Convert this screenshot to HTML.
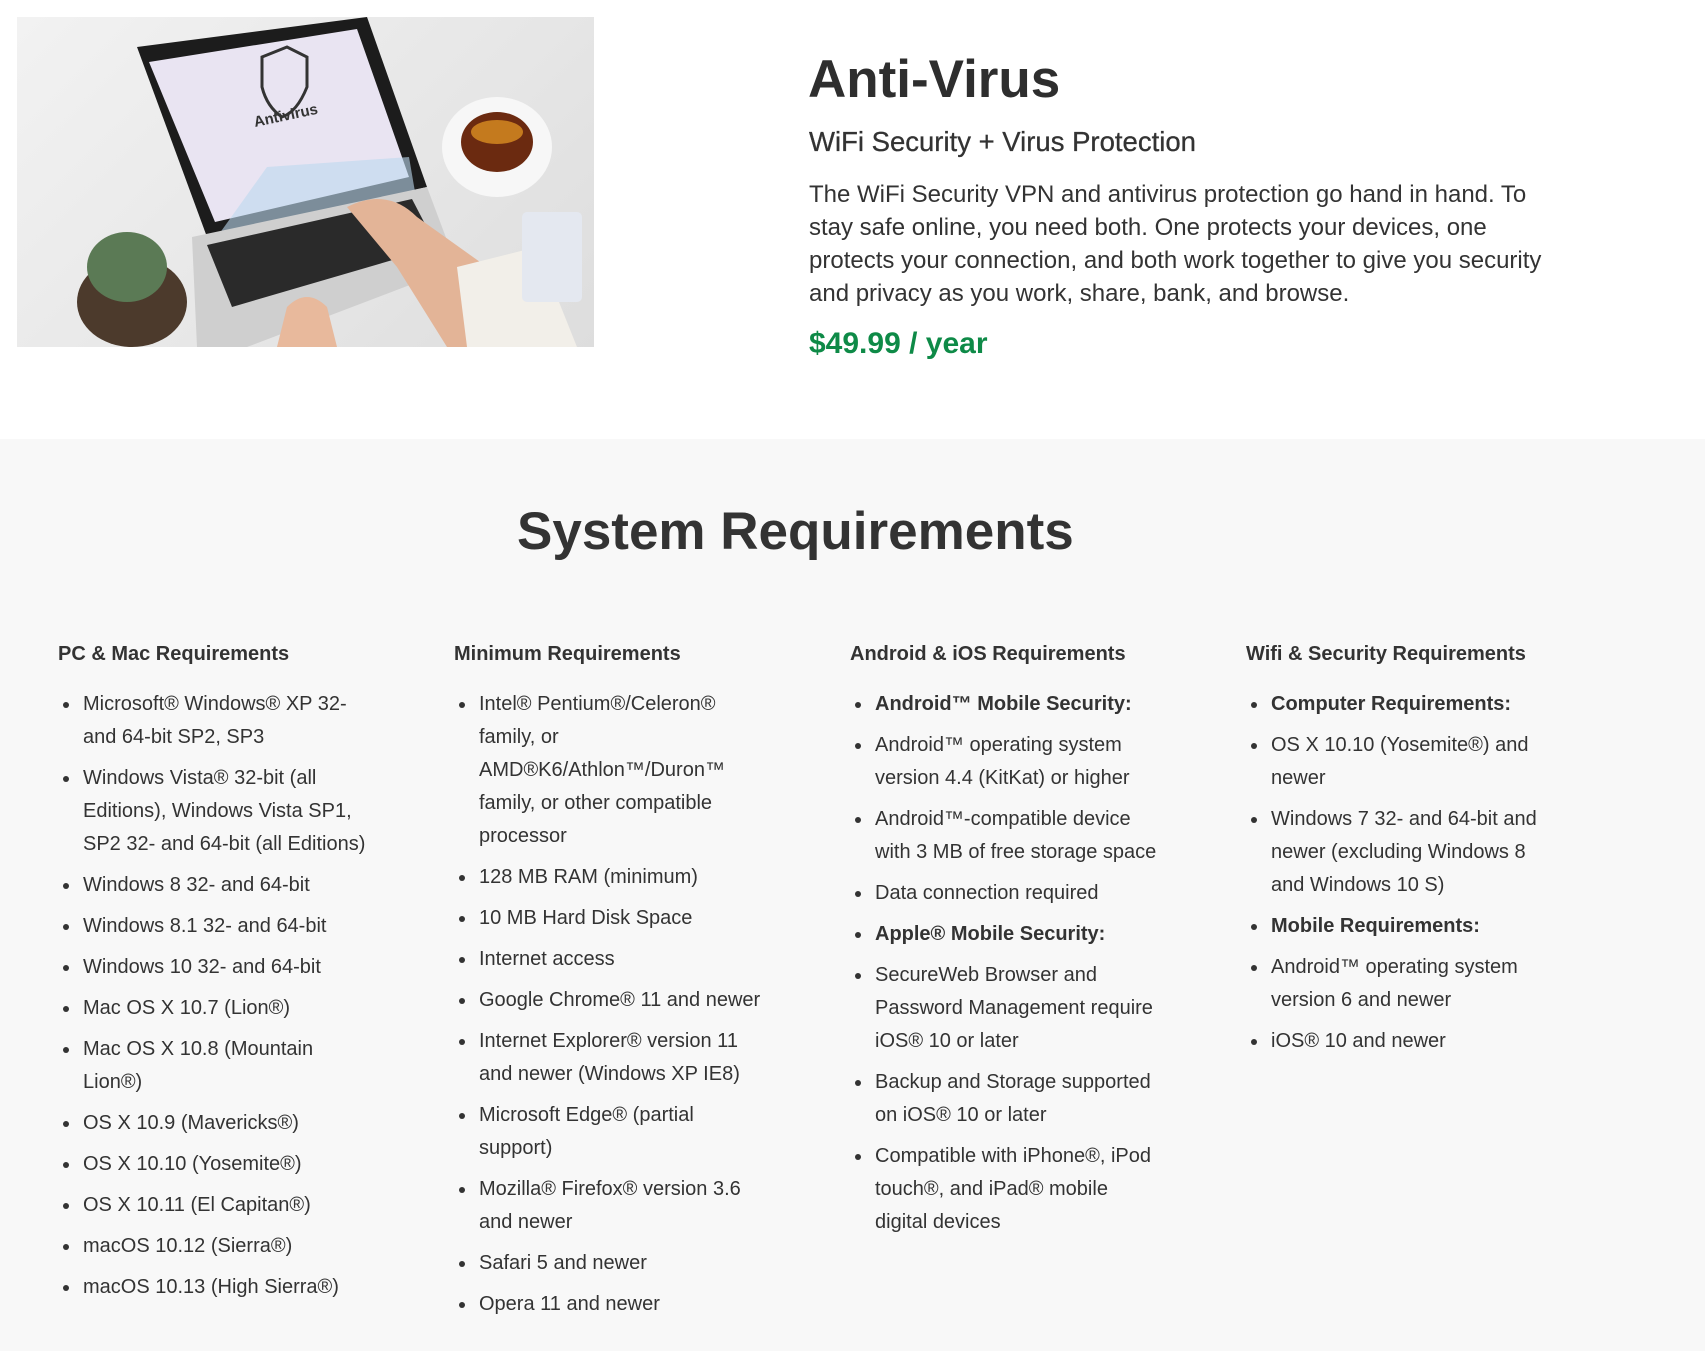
<!DOCTYPE html>
<html><head><meta charset="utf-8">
<style>
*{margin:0;padding:0;box-sizing:border-box}
body{width:1705px;height:1351px;background:#fff;position:relative;overflow:hidden;font-family:"Liberation Sans",Arial,sans-serif;color:#333}
.abs{position:absolute;white-space:nowrap}
#img{left:17px;top:17px;width:577px;height:330px;overflow:hidden;background:linear-gradient(135deg,#f2f2f2,#e6e6e6 60%,#ddd)}
h1{left:808px;top:50px;font-size:53px;line-height:60px;font-weight:bold;color:#2e2e2e}
.sub{left:809px;top:126px;font-size:27.5px;line-height:32px;color:#333;-webkit-text-stroke:0.3px #333}
.para{left:809px;top:178px;font-size:24px;line-height:33px;color:#333}
.price{left:809px;top:326px;font-size:30px;line-height:36px;font-weight:bold;color:#0e8a47}
#gray{position:absolute;left:0;top:439px;width:1705px;height:912px;background:#f8f8f8}
h2{left:517px;top:502px;font-size:53px;line-height:60px;font-weight:bold;color:#333}
.col{position:absolute;top:642px;width:390px}
.col h4{font-size:20px;line-height:24px;font-weight:bold;color:#333;white-space:nowrap}
.col ul{list-style:none;margin-top:22px}
.col li{position:relative;padding-left:25px;font-size:20px;line-height:33px;margin-bottom:8px;white-space:nowrap;color:#333}
.col li:before{content:"";position:absolute;left:5px;top:14px;width:6px;height:6px;border-radius:50%;background:#333}
.col li b{font-weight:bold}
</style></head><body>
<div id="img" class="abs">
<svg width="577" height="330" viewBox="0 0 577 330">
 <ellipse cx="480" cy="130" rx="55" ry="50" fill="#f7f7f7"/>
 <ellipse cx="480" cy="125" rx="36" ry="30" fill="#6b2a10"/>
 <ellipse cx="480" cy="115" rx="26" ry="12" fill="#c47a1e"/>
 <polygon points="120,30 350,0 410,170 190,220" fill="#1c1c1c"/>
 <polygon points="132,45 340,12 392,160 198,205" fill="#e9e4f2"/>
 <polygon points="250,150 392,140 398,175 200,220" fill="#bcd9ef" opacity="0.6"/>
 <text x="238" y="110" font-family="Liberation Sans" font-weight="bold" font-size="15" fill="#333" transform="rotate(-12 238 110)">Antivirus</text>
 <path d="M245 40 L270 30 L290 40 L290 70 Q280 95 265 100 Q250 90 245 70Z" fill="none" stroke="#333" stroke-width="3"/>
 <polygon points="175,220 410,170 440,250 230,330 180,330" fill="#cfcfcf"/>
 <polygon points="190,228 395,182 420,230 215,290" fill="#2a2a2a"/>
 <path d="M330 190 Q370 170 400 200 L470 250 L480 330 L430 330 L380 250 Z" fill="#e3b497"/>
 <path d="M440 250 L520 230 L560 330 L450 330Z" fill="#f2efe9"/>
 <path d="M270 290 Q290 270 310 290 L320 330 L260 330Z" fill="#e8b99c"/>
 <ellipse cx="115" cy="285" rx="55" ry="45" fill="#4c3a2c"/>
 <ellipse cx="110" cy="250" rx="40" ry="35" fill="#5b7a55"/>
 <rect x="505" y="195" width="60" height="90" rx="5" fill="#e4e8f0"/>
</svg>
</div>
<h1 class="abs">Anti-Virus</h1>
<div class="abs sub">WiFi Security + Virus Protection</div>
<div class="abs para">The WiFi Security VPN and antivirus protection go hand in hand. To<br>stay safe online, you need both. One protects your devices, one<br>protects your connection, and both work together to give you security<br>and privacy as you work, share, bank, and browse.</div>
<div class="abs price">$49.99 / year</div>
<div id="gray"></div>
<h2 class="abs">System Requirements</h2>

<div class="col" style="left:58px">
<h4>PC &amp; Mac Requirements</h4>
<ul>
<li>Microsoft® Windows® XP 32-<br>and 64-bit SP2, SP3</li>
<li>Windows Vista® 32-bit (all<br>Editions), Windows Vista SP1,<br>SP2 32- and 64-bit (all Editions)</li>
<li>Windows 8 32- and 64-bit</li>
<li>Windows 8.1 32- and 64-bit</li>
<li>Windows 10 32- and 64-bit</li>
<li>Mac OS X 10.7 (Lion®)</li>
<li>Mac OS X 10.8 (Mountain<br>Lion®)</li>
<li>OS X 10.9 (Mavericks®)</li>
<li>OS X 10.10 (Yosemite®)</li>
<li>OS X 10.11 (El Capitan®)</li>
<li>macOS 10.12 (Sierra®)</li>
<li>macOS 10.13 (High Sierra®)</li>
</ul></div>

<div class="col" style="left:454px">
<h4>Minimum Requirements</h4>
<ul>
<li>Intel® Pentium®/Celeron®<br>family, or<br>AMD®K6/Athlon™/Duron™<br>family, or other compatible<br>processor</li>
<li>128 MB RAM (minimum)</li>
<li>10 MB Hard Disk Space</li>
<li>Internet access</li>
<li>Google Chrome® 11 and newer</li>
<li>Internet Explorer® version 11<br>and newer (Windows XP IE8)</li>
<li>Microsoft Edge® (partial<br>support)</li>
<li>Mozilla® Firefox® version 3.6<br>and newer</li>
<li>Safari 5 and newer</li>
<li>Opera 11 and newer</li>
</ul></div>

<div class="col" style="left:850px">
<h4>Android &amp; iOS Requirements</h4>
<ul>
<li><b>Android™ Mobile Security:</b></li>
<li>Android™ operating system<br>version 4.4 (KitKat) or higher</li>
<li>Android™-compatible device<br>with 3 MB of free storage space</li>
<li>Data connection required</li>
<li><b>Apple® Mobile Security:</b></li>
<li>SecureWeb Browser and<br>Password Management require<br>iOS® 10 or later</li>
<li>Backup and Storage supported<br>on iOS® 10 or later</li>
<li>Compatible with iPhone®, iPod<br>touch®, and iPad® mobile<br>digital devices</li>
</ul></div>

<div class="col" style="left:1246px">
<h4>Wifi &amp; Security Requirements</h4>
<ul>
<li><b>Computer Requirements:</b></li>
<li>OS X 10.10 (Yosemite®) and<br>newer</li>
<li>Windows 7 32- and 64-bit and<br>newer (excluding Windows 8<br>and Windows 10 S)</li>
<li><b>Mobile Requirements:</b></li>
<li>Android™ operating system<br>version 6 and newer</li>
<li>iOS® 10 and newer</li>
</ul></div>
</body></html>
